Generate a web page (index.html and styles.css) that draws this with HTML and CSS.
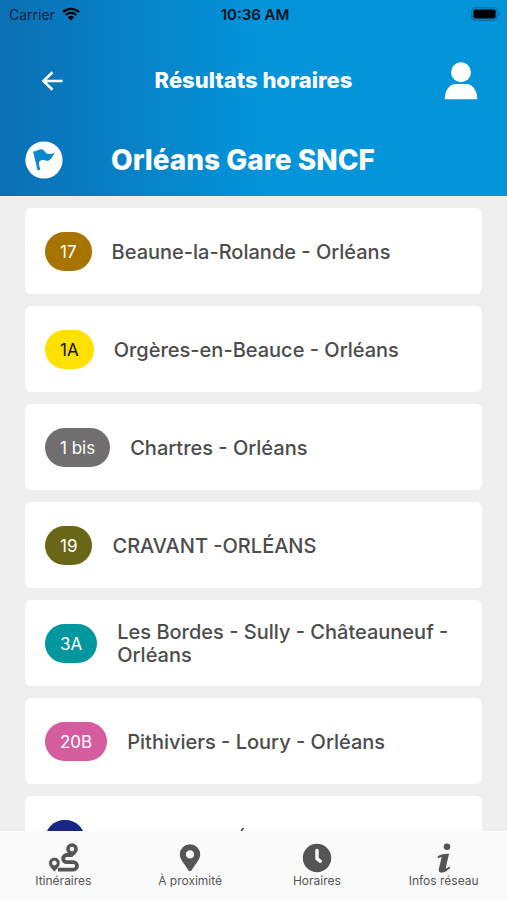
FILE: index.html
```html
<!DOCTYPE html>
<html lang="fr">
<head>
<meta charset="utf-8">
<meta name="viewport" content="width=device-width, initial-scale=1">
<title>Résultats horaires</title>
<link rel="stylesheet" href="styles.css">
</head>
<body>
<div class="app">
  <header class="header">
    <div class="status">
      <div class="carrier">
        <span>Carrier</span>
        <svg width="18" height="14" viewBox="0 0 18 14" aria-hidden="true">
          <path d="M1 5.2a11.5 11.5 0 0 1 16 0M3.8 8a7.5 7.5 0 0 1 10.4 0" fill="none" stroke="currentColor" stroke-width="2.3"/>
          <path d="M5.9 10.2a4.5 4.5 0 0 1 6.2 0L9 13.6z" fill="currentColor"/>
        </svg>
      </div>
      <span class="time">10:36 AM</span>
      <svg class="battery" width="30" height="14" viewBox="0 0 30 14" aria-hidden="true">
        <rect x="0.8" y="0.8" width="25.4" height="12.4" rx="3.6" fill="none" stroke="#0473a8" stroke-width="1.4"/>
        <rect x="2.4" y="2.4" width="22.2" height="9.2" rx="1.8" fill="#000"/>
        <path d="M27.4 4.7v4.6c2-.6 2-4 0-4.6z" fill="#0473a8"/>
      </svg>
    </div>
    <div class="titlebar">
      <button class="icon-button" type="button" aria-label="Retour">
        <svg width="22" height="20" viewBox="0 0 22 20" aria-hidden="true">
          <path d="M21.500 10H2.500M11.500 1.200 2.500 10l9 8.800" fill="none" stroke="currentColor" stroke-width="2.6"/>
        </svg>
      </button>
      <h1>Résultats horaires</h1>
      <button class="icon-button" type="button" aria-label="Mon compte">
        <svg width="34" height="38" viewBox="0 0 34 38" fill="currentColor" aria-hidden="true">
          <circle cx="17" cy="10.2" r="10"/>
          <path d="M.7 37.3c0-9 5-15.3 11-15.3h10.600c6 0 11 6.300 11 15.300z"/>
        </svg>
      </button>
    </div>
    <div class="stop">
      <svg width="38" height="38" viewBox="0 0 38 38" aria-hidden="true">
        <circle cx="19" cy="19" r="18.600" fill="#fff"/>
        <path d="M8 10.600C11.500 10.500 14 8.300 16.500 8.300c3 0 3.700 4.500 7 4.700 2.300.1 4-.8 6.300-1.100-2.300 2.300-3 6.200-6.200 7.500-3.200 1.300-5.400-1.500-8.300.3-1.600 1-1.600 2.300-1.300 3.700l1.300 5.700-2.700.2z" fill="#0a88cf"/>
      </svg>
      <h2>Orléans Gare SNCF</h2>
    </div>
  </header>

  <main class="content">
    <ul class="lines">
      <li><a class="line" href="#17"><span class="badge badge-17">17</span><span class="name">Beaune-la-Rolande - Orléans</span></a></li>
      <li><a class="line" href="#1a"><span class="badge badge-1a">1A</span><span class="name">Orgères-en-Beauce - Orléans</span></a></li>
      <li><a class="line" href="#1bis"><span class="badge badge-1bis">1 bis</span><span class="name">Chartres - Orléans</span></a></li>
      <li><a class="line" href="#19"><span class="badge badge-19">19</span><span class="name">CRAVANT -ORLÉANS</span></a></li>
      <li><a class="line" href="#3a"><span class="badge badge-3a">3A</span><span class="name">Les Bordes - Sully - Châteauneuf - Orléans</span></a></li>
      <li><a class="line" href="#20b"><span class="badge badge-20b">20B</span><span class="name">Pithiviers - Loury - Orléans</span></a></li>
      <li><a class="line" href="#7"><span class="badge badge-7">7</span><span class="name">BRIARE - ORLÉANS</span></a></li>
    </ul>
  </main>

  <nav class="tabs">
    <a class="tab" href="#itineraires">
      <svg width="32" height="30" viewBox="0 0 32 30" aria-hidden="true">
        <path d="M25 12H19.700a3.600 3.600 0 0 0 0 7.200h6.600a3.700 3.700 0 0 1 0 7.400H11" fill="none" stroke="currentColor" stroke-width="3.800"/>
        <path fill="currentColor" fill-rule="evenodd" d="M25 .2a5.800 5.800 0 0 1 5.800 5.800c0 3.200-3 5.500-5.800 8.300-2.800-2.800-5.800-5.100-5.800-8.300A5.800 5.800 0 0 1 25 .2zm0 3.600a2.300 2.300 0 1 0 0 4.600 2.300 2.300 0 0 0 0-4.600z"/>
        <path fill="currentColor" stroke="#fafafa" stroke-width=".8" fill-rule="evenodd" d="M7.400 14.200a5.800 5.800 0 0 1 5.800 5.800c0 3.200-3 6-5.800 9-2.800-3-5.800-5.800-5.800-9a5.800 5.800 0 0 1 5.800-5.800zm0 3.800a2 2 0 1 0 0 4 2 2 0 0 0 0-4z"/>
      </svg>
      <span>Itinéraires</span>
    </a>
    <a class="tab" href="#proximite">
      <svg width="22" height="30" viewBox="0 0 22 30" aria-hidden="true">
        <path fill="currentColor" fill-rule="evenodd" d="M11 1.300A10.200 10.200 0 0 1 21.200 11.500c0 5-4.200 8.600-8.800 16-.7 1.100-2.100 1.100-2.800 0C5 20.100.8 16.500.8 11.500A10.200 10.200 0 0 1 11 1.300zm0 5.900a4.200 4.200 0 1 0 0 8.400 4.200 4.200 0 0 0 0-8.400z"/>
      </svg>
      <span>À proximité</span>
    </a>
    <a class="tab" href="#horaires">
      <svg width="30" height="30" viewBox="0 0 30 30" aria-hidden="true">
        <circle cx="15" cy="15" r="14.200" fill="currentColor"/>
        <path d="M15 7.500v8.200l3.400 2.600" fill="none" stroke="#fafafa" stroke-width="3.400" stroke-linecap="round" stroke-linejoin="round"/>
      </svg>
      <span>Horaires</span>
    </a>
    <a class="tab" href="#infos">
      <svg width="16" height="30" viewBox="0 0 16 30" fill="currentColor" aria-hidden="true">
        <circle cx="11" cy="3.800" r="3.300"/>
        <path d="M1.500 13.400C4.500 11.400 8.500 10.500 13 10.900L9.900 24.200c-.3 1.300.4 1.600 1.400.9l2.200-1.700.9 1.400C11.400 27.800 8.600 29.600 6 29.600c-2.600 0-3.700-1.500-3.200-3.700L5.400 15.300c.3-1.200-.3-1.300-1.300-.9l-2 .8z"/>
      </svg>
      <span>Infos réseau</span>
    </a>
  </nav>
</div>
</body>
</html>
```
FILE: styles.css
```css
* {
  box-sizing: border-box;
}

body {
  margin: 0;
  font-family: Inter, "Liberation Sans", sans-serif;
  color: #555;
  background: #eee;
}

.app {
  display: flex;
  flex-direction: column;
  height: 100vh;
  overflow: hidden;
}

.header {
  flex: none;
  padding-bottom: 10px;
  color: #fff;
  background: linear-gradient(90deg, #0b70b5 0%, #0880c6 24%, #0394da 52%, #0394da 100%);
}

.status {
  display: grid;
  grid-template-columns: 1fr auto 1fr;
  align-items: center;
  height: 28px;
  padding: 0 6px 0 9px;
  font-size: 14px;
  color: #04223a;
}

.carrier {
  display: flex;
  align-items: center;
  gap: 7px;
}

.carrier svg {
  color: #000;
}

.time {
  font-size: 15px;
  font-weight: 600;
  color: #00121c;
}

.battery {
  justify-self: end;
}

.titlebar {
  display: grid;
  grid-template-columns: 34px 1fr 34px;
  align-items: center;
  height: 106px;
  padding: 0 29px;
}

.icon-button {
  display: flex;
  align-items: center;
  justify-content: center;
  width: 34px;
  height: 44px;
  padding: 0;
  border: 0;
  color: inherit;
  background: none;
}

.icon-button:first-child {
  justify-content: flex-end;
}

h1,
h2 {
  margin: 0;
  font-weight: 800;
}

h1 {
  font-size: 22px;
  line-height: 28px;
  padding-bottom: 2px;
  text-align: center;
}

h2 {
  font-size: 28px;
  line-height: 32px;
}

.stop {
  display: flex;
  align-items: center;
  gap: 48px;
  height: 52px;
  padding: 0 25px;
}

.content {
  flex: 1;
  min-height: 0;
  overflow: hidden;
  padding: 12px 25px 0;
}

.lines {
  display: flex;
  flex-direction: column;
  gap: 12px;
  margin: 0;
  padding: 0;
  list-style: none;
}

.line {
  display: flex;
  align-items: center;
  gap: 20px;
  min-height: 86px;
  padding: 0 20px;
  border-radius: 6px;
  color: #4c4c4c;
  background: #fff;
  text-decoration: none;
}

.badge {
  flex: none;
  min-width: 40px;
  padding: 1px 15px 0;
  border-radius: 20px;
  font-size: 17px;
  line-height: 38px;
  text-align: center;
  color: #fff;
}

.badge-17 { background: #a87400; }
.badge-1a { background: #ffe000; color: #111; }
.badge-1bis { background: #716e6f; }
.badge-19 { background: #6a6618; }
.badge-3a { background: #00979f; }
.badge-20b { background: #d45c9f; }
.badge-7 { background: #172583; }

.name {
  padding-top: 2px;
  font-size: 20px;
  font-weight: 500;
  line-height: 23px;
}

.tabs {
  flex: none;
  display: grid;
  grid-template-columns: repeat(4, 1fr);
  height: 69px;
  padding-top: 12px;
  background: #fafafa;
}

.tab {
  display: flex;
  flex-direction: column;
  align-items: center;
  font-size: 12px;
  line-height: 16px;
  color: #555;
  text-decoration: none;
}
```
